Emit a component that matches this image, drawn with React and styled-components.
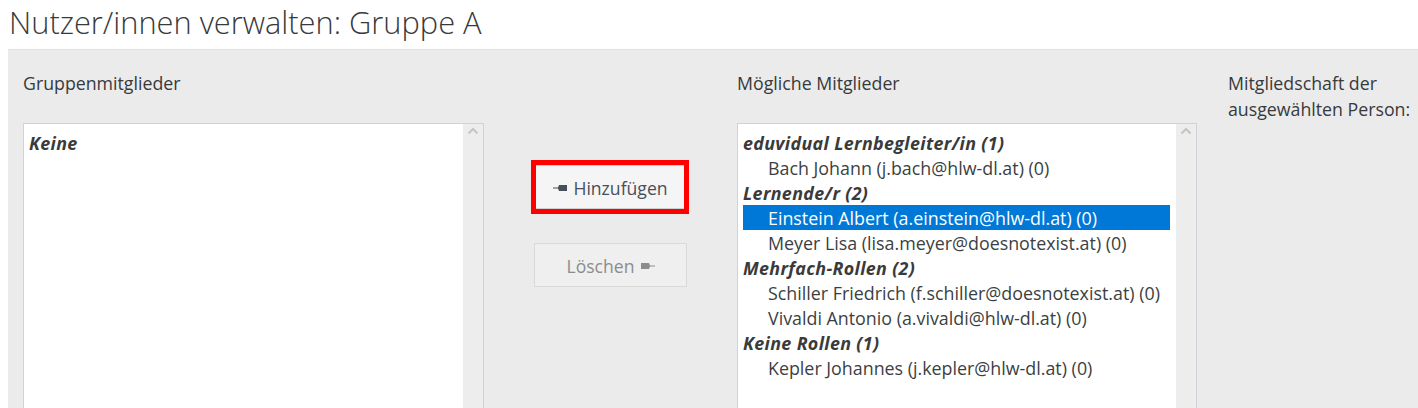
import React from "react";
import styled, { createGlobalStyle } from "styled-components";

const Global = createGlobalStyle`
  html, body { margin: 0; padding: 0; background: #fff; }
  body { font-family: "Open Sans", "Noto Sans", sans-serif; color: #373a3c; overflow: hidden; }
`;

const Page = styled.div`
  width: 1418px;
  height: 408px;
  overflow: hidden;
  padding-left: 8px;
  box-sizing: border-box;
`;

const Title = styled.h2`
  margin: 0;
  height: 49px;
  padding: 1px 0 0 1px;
  box-sizing: border-box;
  font-size: 30.8px;
  font-weight: 300;
  line-height: 42px;
  color: #373a3c;
  white-space: nowrap;
`;

const Panel = styled.div`
  background: #ebebeb;
  border-top: 1px solid #e1e1e1;
  height: 400px;
  padding: 20px 0 0 15px;
  box-sizing: border-box;
  display: flex;
  align-items: flex-start;
`;

const Column = styled.div`
  width: ${(p) => p.$w};
  flex: none;
  display: flex;
  flex-direction: column;
  padding-left: ${(p) => p.$pl || "0"};
`;

const ColLabel = styled.div`
  font-size: 17.75px;
  line-height: 26px;
  height: ${(p) => (p.$auto ? "auto" : "53px")};
  color: #373a3c;
  white-space: nowrap;
`;

const ListBox = styled.div`
  background: #fff;
  border: 1px solid #cfd3d8;
  height: 320px;
  display: flex;
`;

const Options = styled.div`
  flex: 1;
  min-width: 0;
  padding: 6px 6px 0 5px;
  font-size: 17.85px;
`;

const Group = styled.div`
  height: 25px;
  line-height: 27px;
  font-weight: 700;
  font-style: italic;
  letter-spacing: 0.35px;
  color: #3a3a3a;
  white-space: nowrap;
`;

const Option = styled.div`
  height: 25px;
  line-height: 27px;
  padding-left: 25px;
  white-space: nowrap;
  color: ${(p) => (p.$selected ? "#fff" : "#3b3f42")};
  background: ${(p) => (p.$selected ? "#0078d7" : "transparent")};
`;

const Scrollbar = styled.div`
  width: 20px;
  flex: none;
  background: #ededed;
  display: flex;
  justify-content: center;
  padding-top: 3px;
  box-sizing: border-box;
`;

const Buttons = styled.div`
  display: flex;
  flex-direction: column;
  align-items: center;
  padding-top: 95px;
  gap: 34px;
`;

const Mark = styled.div`
  position: relative;
  &::after {
    content: "";
    position: absolute;
    top: -5px;
    bottom: -5px;
    left: -3px;
    right: -2px;
    border: 5px solid #ff0000;
    pointer-events: none;
  }
`;

const Button = styled.button`
  width: 153px;
  height: 44px;
  font-family: "Open Sans", "Noto Sans", sans-serif;
  font-size: 17.6px;
  border: 1px solid ${(p) => (p.disabled ? "#d9d9d9" : "#cfcfcf")};
  background: ${(p) => (p.disabled ? "#efefef" : "#f5f5f5")};
  color: ${(p) => (p.disabled ? "#8c8c8c" : "#47505a")};
  display: flex;
  align-items: center;
  justify-content: center;
  gap: 6px;
  padding: 2px 0 0 0;
  cursor: ${(p) => (p.disabled ? "default" : "pointer")};
`;

const Pointer = ({ dir, color }) => (
  <svg width="14" height="8" viewBox="0 0 14 8" style={{ transform: dir === "right" ? "scaleX(-1)" : "none" }}>
    <path d="M0 3.6 L5 3.6 L6 1 L14 1 L14 7 L6 7 L5 4.4 L0 4.4 Z" fill={color} />
  </svg>
);

const Chevron = () => (
  <svg width="12" height="8" viewBox="0 0 12 8">
    <path d="M1.5 6.5 L6 2 L10.5 6.5" fill="none" stroke="#c4c4c4" strokeWidth="2" />
  </svg>
);

const data = [
  { group: "eduvidual Lernbegleiter/in (1)", items: ["Bach Johann (j.bach@hlw-dl.at) (0)"] },
  {
    group: "Lernende/r (2)",
    items: ["Einstein Albert (a.einstein@hlw-dl.at) (0)", "Meyer Lisa (lisa.meyer@doesnotexist.at) (0)"],
  },
  {
    group: "Mehrfach-Rollen (2)",
    items: ["Schiller Friedrich (f.schiller@doesnotexist.at) (0)", "Vivaldi Antonio (a.vivaldi@hlw-dl.at) (0)"],
  },
  { group: "Keine Rollen (1)", items: ["Kepler Johannes (j.kepler@hlw-dl.at) (0)"] },
];

export default function App() {
  return (
    <Page>
      <Global />
      <Title>Nutzer/innen verwalten: Gruppe A</Title>
      <Panel>
        <Column $w="461px">
          <ColLabel>Gruppenmitglieder</ColLabel>
          <ListBox>
            <Options>
              <Group>Keine</Group>
            </Options>
            <Scrollbar>
              <Chevron />
            </Scrollbar>
          </ListBox>
        </Column>

        <Column $w="253px">
          <Buttons>
            <Mark>
              <Button>
                <Pointer dir="left" color="#47505a" />
                Hinzufügen
              </Button>
            </Mark>
            <Button disabled>
              Löschen
              <Pointer dir="right" color="#8c8c8c" />
            </Button>
          </Buttons>
        </Column>

        <Column $w="460px">
          <ColLabel>Mögliche Mitglieder</ColLabel>
          <ListBox>
            <Options>
              {data.map((g) => (
                <React.Fragment key={g.group}>
                  <Group>{g.group}</Group>
                  {g.items.map((it) => (
                    <Option key={it} $selected={it.startsWith("Einstein")}>
                      {it}
                    </Option>
                  ))}
                </React.Fragment>
              ))}
            </Options>
            <Scrollbar>
              <Chevron />
            </Scrollbar>
          </ListBox>
        </Column>

        <Column $w="200px" $pl="31px">
          <ColLabel $auto>
            Mitgliedschaft der
            <br />
            ausgewählten Person:
          </ColLabel>
        </Column>
      </Panel>
    </Page>
  );
}
